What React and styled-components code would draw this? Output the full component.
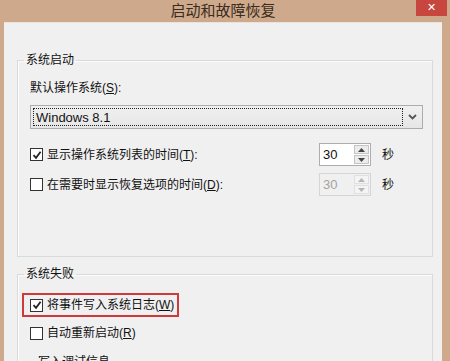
import React from "react";
import styled, { createGlobalStyle } from "styled-components";

const GlobalStyle = createGlobalStyle`
  html, body {
    margin: 0;
    padding: 0;
    background: #cfa98b;
    overflow: hidden;
  }
`;

const Window = styled.div`
  width: 450px;
  height: 361px;
  background: #cfa98b;
  padding: 0 8px 0 4px;
  box-sizing: border-box;
  display: flex;
  flex-direction: column;
  overflow: hidden;
  font-family: "Liberation Sans", "Noto Sans CJK SC", sans-serif;
  text-autospace: no-autospace;
`;

const TitleBar = styled.div`
  height: 24px;
  display: grid;
  grid-template-columns: 1fr auto 1fr;
  align-items: start;
`;

const Title = styled.div`
  grid-column: 2;
  font-size: 15px;
  line-height: 22px;
  color: #3a2c20;
`;

const CloseButton = styled.div`
  grid-column: 3;
  justify-self: end;
  margin-right: -5px;
  width: 31px;
  height: 16px;
  background: #c7463e;
  color: #fff;
  font-family: "DejaVu Sans", sans-serif;
  font-size: 11px;
  font-weight: bold;
  line-height: 16px;
  text-align: center;
`;

const Body = styled.div`
  flex: 1;
  background: #f0f0f0;
  border-top: 1px solid #e9e4e0;
  padding: 0 9px 0 13px;
  display: flex;
  flex-direction: column;
  gap: 9px;
`;

const Group = styled.fieldset`
  margin: 0;
  min-width: 0;
  border: 1px solid #dadada;
  box-shadow: inset 1px 1px 0 #fbfbfb;
  padding: ${(p) => p.$pad || "0 9px 0 12px"};
  ${(p) => p.$height && `height: ${p.$height}px;`}
  box-sizing: border-box;
`;

const Legend = styled.legend`
  margin-left: ${(p) => p.$offset || -6}px;
  padding: 0 2px;
  font-size: 12px;
  line-height: 16px;
  color: #111;
`;

const Label = styled.div`
  margin-top: 12px;
  font-size: 12px;
  line-height: 16px;
  color: #111;
`;

const Select = styled.div`
  margin-top: 9px;
  height: 24px;
  box-sizing: border-box;
  border: 1px solid #acacac;
  background: linear-gradient(#f0f0f0, #e6e6e6);
  display: flex;
  align-items: stretch;
  padding: 2px 0 2px 2px;
`;

const SelectValue = styled.div`
  flex: 1;
  border: 1px dotted #222;
  font-family: "Liberation Sans", "Noto Sans", sans-serif;
  font-size: 13px;
  line-height: 17px;
  padding-left: 2px;
  color: #111;
`;

const SelectArrow = styled.div`
  width: 19px;
  display: flex;
  align-items: center;
  justify-content: center;
`;

const Rows = styled.div`
  margin-top: 14px;
  display: flex;
  flex-direction: column;
  gap: 7px;
`;

const Row = styled.div`
  display: grid;
  grid-template-columns: 1fr 52px 52px;
  align-items: center;
  height: 23px;
`;

const CheckLabel = styled.label`
  display: inline-flex;
  align-items: center;
  gap: 4px;
  font-size: 12px;
  line-height: 16px;
  color: #111;
  ${(p) =>
    p.$highlight &&
    `
    border: 2px solid #cf3b3c;
    margin-left: -8px;
    padding: 2px 3px 2px 6px;
    justify-self: start;
  `}
`;

const Box = styled.span`
  width: 13px;
  height: 13px;
  box-sizing: border-box;
  border: 1px solid #333;
  background: #fff;
  display: flex;
  align-items: center;
  justify-content: center;
`;

const Spin = styled.div`
  height: 23px;
  box-sizing: border-box;
  border: 1px solid ${(p) => (p.$disabled ? "#d5d5d5" : "#abadb3")};
  background: ${(p) => (p.$disabled ? "#f0f0f0" : "#fff")};
  display: flex;
`;

const SpinValue = styled.div`
  flex: 1;
  padding-left: 3px;
  font-family: "Liberation Sans", "Noto Sans", sans-serif;
  font-size: 13px;
  line-height: 21px;
  color: ${(p) => (p.$disabled ? "#a3a3a3" : "#111")};
`;

const SpinButtons = styled.div`
  width: 15px;
  margin: 1px 1px 1px 0;
  display: flex;
  flex-direction: column;
  gap: 1px;
`;

const SpinButton = styled.div`
  flex: 1;
  border: 1px solid ${(p) => (p.$disabled ? "#e0e0e0" : "#c4c4c4")};
  background: ${(p) => (p.$disabled ? "#f4f4f4" : "#ececec")};
  display: flex;
  align-items: center;
  justify-content: center;
`;

const Unit = styled.div`
  padding-left: 11px;
  font-size: 12px;
  line-height: 16px;
  color: #111;
`;

const FailRows = styled.div`
  margin-top: 12px;
  display: flex;
  flex-direction: column;
  gap: 6px;
`;

const FailRow = styled.div`
  display: flex;
  align-items: center;
  height: 22px;
`;

const Check = ({ checked }) => (
  <Box>
    {checked && (
      <svg width="10" height="10" viewBox="0 0 10 10">
        <path d="M1.5 5.2 L4 7.8 L8.6 1.8" fill="none" stroke="#222" strokeWidth="1.8" />
      </svg>
    )}
  </Box>
);

const Triangle = ({ up, disabled }) => (
  <svg width="7" height="4" viewBox="0 0 7 4">
    <path
      d={up ? "M0 4 L3.5 0 L7 4 Z" : "M0 0 L3.5 4 L7 0 Z"}
      fill={disabled ? "#b5b5b5" : "#444"}
    />
  </svg>
);

const SpinBox = ({ value, disabled }) => (
  <Spin $disabled={disabled}>
    <SpinValue $disabled={disabled}>{value}</SpinValue>
    <SpinButtons>
      <SpinButton $disabled={disabled}>
        <Triangle up disabled={disabled} />
      </SpinButton>
      <SpinButton $disabled={disabled}>
        <Triangle disabled={disabled} />
      </SpinButton>
    </SpinButtons>
  </Spin>
);

const U = styled.span`
  text-decoration: underline;
`;

function App() {
  return (
    <>
      <GlobalStyle />
      <Window>
        <TitleBar>
          <Title>启动和故障恢复</Title>
          <CloseButton>✕</CloseButton>
        </TitleBar>
        <Body>
          <Group $height={205} style={{ marginTop: 29 }}>
            <Legend>系统启动</Legend>
            <Label>
              默认操作系统(<U>S</U>):
            </Label>
            <Select>
              <SelectValue>Windows 8.1</SelectValue>
              <SelectArrow>
                <svg width="9" height="6" viewBox="0 0 9 6">
                  <path d="M1 1 L4.5 4.5 L8 1" fill="none" stroke="#555" strokeWidth="1.8" />
                </svg>
              </SelectArrow>
            </Select>
            <Rows>
              <Row>
                <CheckLabel>
                  <Check checked />
                  <span>显示操作系统列表的时间(<U>T</U>):</span>
                </CheckLabel>
                <SpinBox value="30" />
                <Unit>秒</Unit>
              </Row>
              <Row>
                <CheckLabel>
                  <Check />
                  <span>在需要时显示恢复选项的时间(<U>D</U>):</span>
                </CheckLabel>
                <SpinBox value="30" disabled />
                <Unit>秒</Unit>
              </Row>
            </Rows>
          </Group>
          <Group>
            <Legend>系统失败</Legend>
            <FailRows>
              <FailRow>
                <CheckLabel $highlight>
                  <Check checked />
                  <span>将事件写入系统日志(<U>W</U>)</span>
                </CheckLabel>
              </FailRow>
              <FailRow>
                <CheckLabel>
                  <Check />
                  <span>自动重新启动(<U>R</U>)</span>
                </CheckLabel>
              </FailRow>
              <Group $pad="0 8px 40px" style={{ marginTop: 4 }}>
                <Legend $offset={-3}>写入调试信息</Legend>
              </Group>
            </FailRows>
          </Group>
        </Body>
      </Window>
    </>
  );
}

export default App;
